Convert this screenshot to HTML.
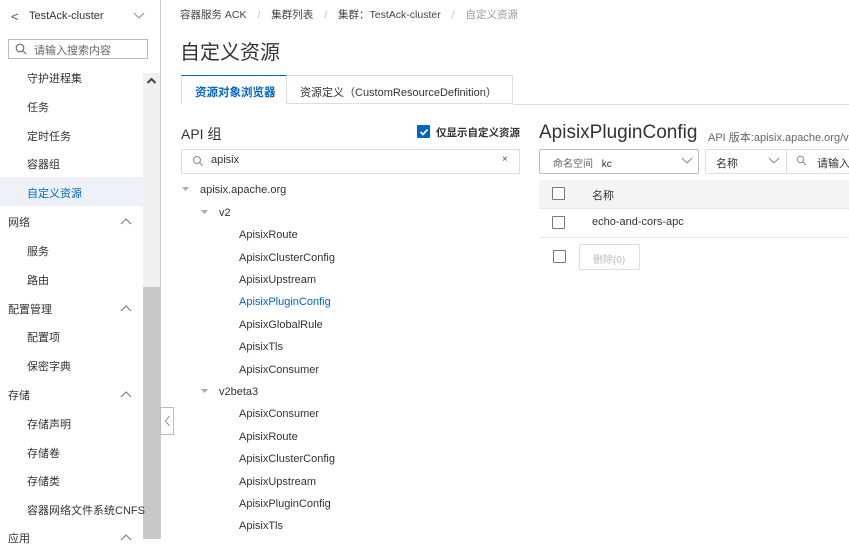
<!DOCTYPE html>
<html><head><meta charset="utf-8"><style>
*{box-sizing:border-box;margin:0;padding:0}
body{width:849px;height:539px;overflow:hidden;background:#fff;font-family:"Liberation Sans","Noto Sans CJK SC",sans-serif;font-size:12px;color:#333;position:relative}
.a{position:absolute;white-space:nowrap}
.side{position:absolute;left:0;top:0;width:161px;height:539px;border-right:1px solid #ccc;background:#fff}
.side .a{font-size:11px}
.cb{position:absolute;width:13px;height:13px;border:1px solid #777;border-radius:1px;background:#fff}
</style></head><body>
<div class="side">
<div class="a" style="left:11px;top:9px;font-size:13px !important;color:#555">&lt;</div>
<div class="a" style="left:29px;top:10px;color:#333">TestAck-cluster</div>
<svg class="a" style="left:133px;top:12px" width="12" height="8"><path d="M1 1l5 5 5-5" fill="none" stroke="#999" stroke-width="1.2"/></svg>
<div class="a" style="left:8px;top:39px;width:140px;height:20px;border:1px solid #bbb"></div>
<svg class="a" style="left:15px;top:43px" width="12" height="12"><circle cx="5" cy="5" r="3.8" fill="none" stroke="#666" stroke-width="1.1"/><path d="M8 8l3 3" stroke="#666" stroke-width="1.1"/></svg>
<div class="a" style="left:34px;top:42px;color:#666">请输入搜索内容</div>
<div class="a" style="left:143px;top:73px;width:17px;height:214px;background:#f0f0f0"></div>
<div class="a" style="left:143px;top:287px;width:17px;height:252px;background:#c8c8c8"></div>
<svg class="a" style="left:146px;top:77px" width="11" height="8"><path d="M1.5 6l4-4 4 4" fill="none" stroke="#444" stroke-width="2"/></svg>
<div class="a" style="left:0;top:177px;width:143px;height:29px;background:#eef2f8"></div>
<div class="a" style="left:27px;top:70px">守护进程集</div>
<div class="a" style="left:27px;top:99px">任务</div>
<div class="a" style="left:27px;top:128px">定时任务</div>
<div class="a" style="left:27px;top:156px">容器组</div>
<div class="a" style="left:27px;top:185px;color:#0064c8">自定义资源</div>
<div class="a" style="left:8px;top:214px">网络</div>
<div class="a" style="left:27px;top:243px">服务</div>
<div class="a" style="left:27px;top:272px">路由</div>
<div class="a" style="left:8px;top:301px">配置管理</div>
<div class="a" style="left:27px;top:329px">配置项</div>
<div class="a" style="left:27px;top:358px">保密字典</div>
<div class="a" style="left:8px;top:387px">存储</div>
<div class="a" style="left:27px;top:416px">存储声明</div>
<div class="a" style="left:27px;top:445px">存储卷</div>
<div class="a" style="left:27px;top:473px">存储类</div>
<div class="a" style="left:27px;top:502px">容器网络文件系统CNFS</div>
<div class="a" style="left:8px;top:530px">应用</div>
<svg class="a" style="left:120px;top:217px" width="12" height="8"><path d="M1 7l5-5 5 5" fill="none" stroke="#777" stroke-width="1.1"/></svg>
<svg class="a" style="left:120px;top:304px" width="12" height="8"><path d="M1 7l5-5 5 5" fill="none" stroke="#777" stroke-width="1.1"/></svg>
<svg class="a" style="left:120px;top:390px" width="12" height="8"><path d="M1 7l5-5 5 5" fill="none" stroke="#777" stroke-width="1.1"/></svg>
<svg class="a" style="left:120px;top:533px" width="12" height="8"><path d="M1 7l5-5 5 5" fill="none" stroke="#777" stroke-width="1.1"/></svg>
</div>
<div class="a" style="left:160px;top:407px;width:14px;height:28px;border:1px solid #bbb;background:#fff"></div>
<svg class="a" style="left:164px;top:415px" width="7" height="12"><path d="M5.5 1l-4 5 4 5" fill="none" stroke="#888" stroke-width="1"/></svg>

<div class="a" style="left:180px;top:7px;font-size:10.5px;color:#444">容器服务 ACK <span style="color:#bbb;margin:0 8px">/</span> 集群列表 <span style="color:#bbb;margin:0 8px">/</span> 集群：TestAck-cluster <span style="color:#bbb;margin:0 8px">/</span> <span style="color:#999">自定义资源</span></div>
<div class="a" style="left:180px;top:36px;font-size:20px;color:#333">自定义资源</div>
<div class="a" style="left:181px;top:75px;width:106px;height:30px;border-top:1px solid #0064c8;border-left:1px solid #ddd;border-right:1px solid #ddd;background:#fff"></div>
<div class="a" style="left:195px;top:84px;color:#0064c8;font-weight:bold;font-size:11.5px">资源对象浏览器</div>
<div class="a" style="left:287px;top:75px;width:226px;height:29px;border:1px solid #ddd;border-left:none"></div>
<div class="a" style="left:300px;top:84px;color:#333;font-size:11px">资源定义（CustomResourceDefinition）</div>
<div class="a" style="left:513px;top:104px;width:336px;height:1px;background:#ddd"></div>
<div class="a" style="left:181px;top:104px;width:106px;height:1px;background:#fff"></div>

<div class="a" style="left:181px;top:124px;font-size:14px">API 组</div>
<div class="a" style="left:417px;top:125px;width:13px;height:13px;background:#0064c8;border-radius:1px"></div>
<svg class="a" style="left:419px;top:127px" width="10" height="10"><path d="M1.5 5l2.5 2.5 4.5-5" fill="none" stroke="#fff" stroke-width="1.8"/></svg>
<div class="a" style="left:436px;top:125px;font-weight:bold;font-size:10.5px">仅显示自定义资源</div>
<div class="a" style="left:181px;top:149px;width:339px;height:25px;border:1px solid #ddd"></div>
<svg class="a" style="left:192px;top:155px" width="12" height="12"><circle cx="5" cy="5" r="3.5" fill="none" stroke="#888" stroke-width="1"/><path d="M7.6 7.6l3 3" stroke="#888" stroke-width="1"/></svg>
<div class="a" style="left:211px;top:154px;font-size:11px">apisix</div>
<div class="a" style="left:502px;top:154px;font-size:10px;color:#555">×</div>
<svg class="a" style="left:182px;top:187px" width="7" height="5"><path d="M0 0h7l-3.5 4z" fill="#aaa"/></svg>
<div class="a" style="left:200px;top:184px;font-size:11px">apisix.apache.org</div>
<svg class="a" style="left:201px;top:210px" width="7" height="5"><path d="M0 0h7l-3.5 4z" fill="#aaa"/></svg>
<div class="a" style="left:219px;top:207px;font-size:11px">v2</div>
<div class="a" style="left:239px;top:229px;font-size:11px">ApisixRoute</div>
<div class="a" style="left:239px;top:252px;font-size:11px">ApisixClusterConfig</div>
<div class="a" style="left:239px;top:274px;font-size:11px">ApisixUpstream</div>
<div class="a" style="left:239px;top:296px;font-size:11px;color:#0064c8">ApisixPluginConfig</div>
<div class="a" style="left:239px;top:319px;font-size:11px">ApisixGlobalRule</div>
<div class="a" style="left:239px;top:341px;font-size:11px">ApisixTls</div>
<div class="a" style="left:239px;top:364px;font-size:11px">ApisixConsumer</div>
<svg class="a" style="left:201px;top:389px" width="7" height="5"><path d="M0 0h7l-3.5 4z" fill="#aaa"/></svg>
<div class="a" style="left:219px;top:386px;font-size:11px">v2beta3</div>
<div class="a" style="left:239px;top:408px;font-size:11px">ApisixConsumer</div>
<div class="a" style="left:239px;top:431px;font-size:11px">ApisixRoute</div>
<div class="a" style="left:239px;top:453px;font-size:11px">ApisixClusterConfig</div>
<div class="a" style="left:239px;top:476px;font-size:11px">ApisixUpstream</div>
<div class="a" style="left:239px;top:498px;font-size:11px">ApisixPluginConfig</div>
<div class="a" style="left:239px;top:520px;font-size:11px">ApisixTls</div>

<div class="a" style="left:539px;top:122px;font-size:19px">ApisixPluginConfig</div>
<div class="a" style="left:708px;top:129px;font-size:11px;color:#666">API 版本:apisix.apache.org/v2</div>
<div class="a" style="left:539px;top:149px;width:160px;height:25px;border:1px solid #bbb;border-radius:2px"></div>
<div class="a" style="left:553px;top:155px;font-size:10px;color:#666">命名空间 <span style="color:#333;margin-left:6px">kc</span></div>
<svg class="a" style="left:681px;top:157px" width="12" height="7"><path d="M1 1l5 5 5-5" fill="none" stroke="#888" stroke-width="1"/></svg>
<div class="a" style="left:705px;top:149px;width:150px;height:25px;border:1px solid #ddd;border-radius:2px"></div>
<div class="a" style="left:786px;top:149px;width:1px;height:25px;background:#ddd"></div>
<div class="a" style="left:716px;top:155px;font-size:11px">名称</div>
<svg class="a" style="left:768px;top:157px" width="12" height="7"><path d="M1 1l5 5 5-5" fill="none" stroke="#888" stroke-width="1"/></svg>
<svg class="a" style="left:796px;top:155px" width="11" height="11"><circle cx="4.5" cy="4.5" r="3.3" fill="none" stroke="#888" stroke-width="1"/><path d="M7 7l3 3" stroke="#888" stroke-width="1"/></svg>
<div class="a" style="left:817px;top:155px;font-size:11px">请输入</div>
<div class="a" style="left:539px;top:180px;width:310px;height:29px;background:#f3f4f6;border-bottom:1px solid #e6e6e6"></div>
<div class="cb" style="left:552px;top:187px"></div>
<div class="a" style="left:592px;top:187px;font-size:11px">名称</div>
<div class="a" style="left:539px;top:237px;width:310px;height:1px;background:#e6e6e6"></div>
<div class="cb" style="left:552px;top:216px"></div>
<div class="a" style="left:592px;top:216px;font-size:11px">echo-and-cors-apc</div>
<div class="cb" style="left:553px;top:250px"></div>
<div class="a" style="left:579px;top:244px;width:61px;height:26px;border:1px solid #ddd;border-radius:2px"></div>
<div class="a" style="left:593px;top:251px;font-size:10px;color:#bbb">删除(0)</div>
</body></html>
